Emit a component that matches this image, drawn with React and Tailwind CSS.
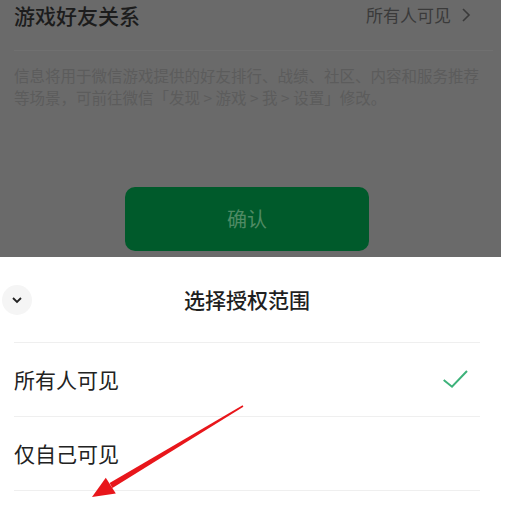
const font = { fontFamily: '"Noto Sans CJK SC", "Noto Sans", sans-serif' };

function Arrow() {
  // red hand-drawn style arrow, tip at bottom-left
  return (
    <svg className="absolute left-0 top-0 pointer-events-none" width="508" height="506" viewBox="0 0 508 506">
      <polygon
        points="243.4,406.7 242.6,405.3 109.6,482.9 112.4,488.1"
        fill="#e8161b"
      />
      <polygon points="92,497 105.8,477.8 115.8,493.6" fill="#e8161b" />
    </svg>
  );
}

export default function App() {
  return (
    <div className="relative w-[508px] h-[506px] bg-white overflow-hidden" style={font}>
      {/* dimmed page behind sheet */}
      <div className="flex h-[257px]">
        <div className="w-[501px] h-full bg-[#6a6a6a] flex flex-col">
          <div className="flex items-center justify-between pl-[14px] pr-[30px] h-[30px]">
            <span className="text-[21px] leading-[30px] font-medium text-[#1c1c1c]">游戏好友关系</span>
            <span className="flex items-center gap-[10px] text-[17px] text-[#3a3a3a]">
              所有人可见
              <svg width="10" height="16" viewBox="0 0 10 16">
                <path d="M2 2l6 6-6 6" fill="none" stroke="#3a3a3a" strokeWidth="1.6" />
              </svg>
            </span>
          </div>
          <div className="mt-[20px] ml-[14px] mr-[8px] border-b border-[#707070]" />
          <p className="mt-[13px] px-[14px] text-[15.5px] leading-[22px] text-[#5c5c5c]">
            信息将用于微信游戏提供的好友排行、战绩、社区、内容和服务推荐等场景，可前往微信「发现 &gt; 游戏 &gt; 我 &gt; 设置」修改。
          </p>
          <div className="mt-[79px] ml-[125px] w-[244px] h-[64px] rounded-[10px] bg-[#005a2b] flex items-center justify-center text-[20px] text-[#4f8a64]">
            确认
          </div>
        </div>
      </div>

      {/* bottom sheet */}
      <div className="flex items-center h-[85px]">
        <div className="ml-[2px] w-[30px] h-[30px] rounded-full bg-[#f5f5f5] flex items-center justify-center">
          <svg width="12" height="8" viewBox="0 0 12 8">
            <path d="M2 2l4 4 4-4" fill="none" stroke="#222" strokeWidth="1.8" />
          </svg>
        </div>
        <div className="flex-1 text-center text-[21px] font-medium text-[#1f1f1f]">选择授权范围</div>
        <div className="w-[46px]" />
      </div>
      <div className="ml-[14px] mr-[28px] border-b border-[#efefef]" />
      <div className="flex items-center justify-between h-[73px] pl-[14px] pr-[40px]">
        <span className="text-[21px] text-[#222]">所有人可见</span>
        <svg width="26" height="20" viewBox="0 0 26 20">
          <path d="M1.7 10l8.3 6.7L25 1" fill="none" stroke="#3db27a" strokeWidth="2" />
        </svg>
      </div>
      <div className="ml-[14px] mr-[28px] border-b border-[#efefef]" />
      <div className="flex items-center h-[73px] pl-[14px]">
        <span className="text-[21px] text-[#222]">仅自己可见</span>
      </div>
      <div className="ml-[14px] mr-[28px] border-b border-[#efefef]" />

      <Arrow />
    </div>
  );
}
